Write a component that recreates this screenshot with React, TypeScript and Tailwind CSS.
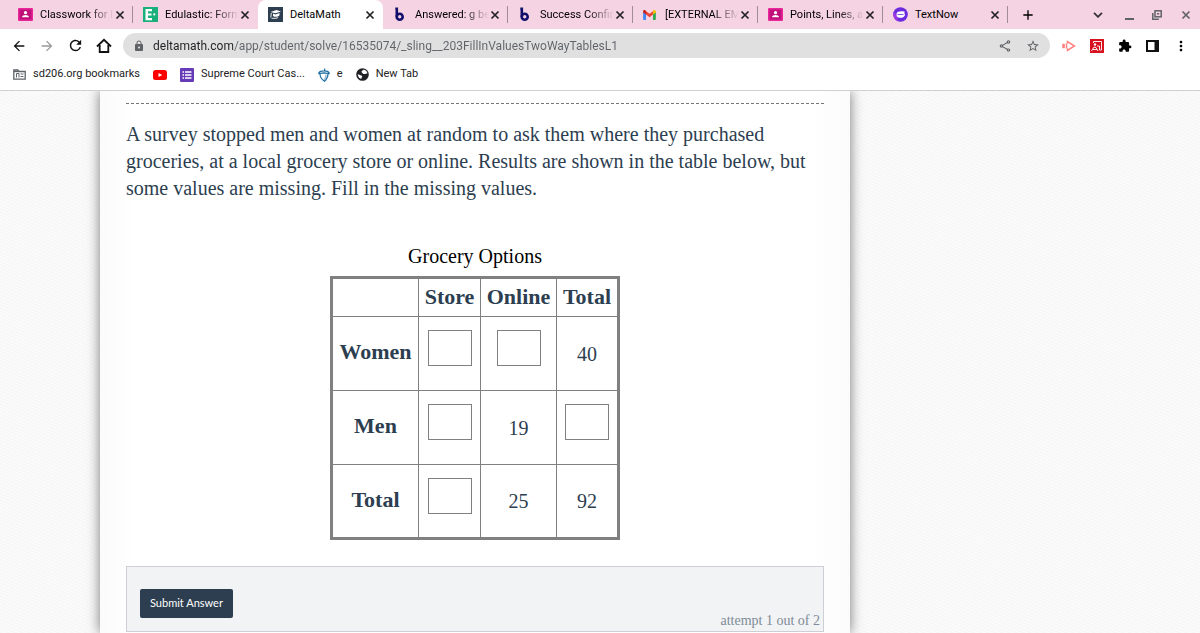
import { useState } from 'react';
import type { ReactNode } from 'react';
import {
  MdAdd,
  MdArrowBack,
  MdArrowForward,
  MdExtension,
  MdLock,
  MdMoreVert,
  MdOutlineShare,
  MdRefresh,
  MdStarBorder,
} from 'react-icons/md';

const ClassroomIcon = () => (
  <svg viewBox="0 0 15 13" className="h-[13px] w-[15px] shrink-0">
    <rect width="15" height="13" rx="1" fill="#e8289a" />
    <rect x="1.5" y="1.5" width="12" height="10" fill="#c2107a" />
    <circle cx="7.5" cy="4.7" r="1.6" fill="#fff" />
    <path d="M4 9.3c0-1.700 2-2.400 3.500-2.400s3.500.700 3.500 2.400z" fill="#fff" />
  </svg>
);

const EdulasticIcon = () => (
  <svg viewBox="0 0 15 15" className="size-[15px] shrink-0">
    <rect width="15" height="15" fill="#1ab07b" />
    <path d="M2.500 2h6.500v2.200H5v2.200h3.500v2.200H5v2.400h4V13.200H2.500z" fill="#fff" />
    <circle cx="11.300" cy="7.400" r="1.100" fill="#fff" />
  </svg>
);

const DeltaMathIcon = () => (
  <svg viewBox="0 0 15 15" className="size-[15px] shrink-0">
    <rect width="15" height="15" fill="#2c3e50" />
    <path d="M2.500 5l6-2 4.500 1.500-5.500 1.800z" fill="#fff" />
    <path d="M5 6.500l2.500.9 4-1.300v2.200c-1.500 1.800-5 2-6.500.6z" fill="#fff" />
    <path d="M3.300 6l-.5 4.500M3.500 11.300h4.500l2-.8" stroke="#fff" strokeWidth=".9" fill="none" />
  </svg>
);

const BartlebyIcon = () => (
  <svg viewBox="0 0 14 15" className="h-[15px] w-[14px] shrink-0" fill="none" stroke="#11106b" strokeWidth="2.600">
    <path d="M2.300 1.800h1.500v8" />
    <circle cx="6.700" cy="9.800" r="3" />
  </svg>
);

const GmailIcon = () => (
  <svg viewBox="0 0 14 11" className="h-[10px] w-[13px] shrink-0">
    <path d="M0 2v8a1 1 0 0 0 1 1h2.200V4.200z" fill="#4285f4" />
    <path d="M14 2v8a1 1 0 0 1-1 1h-2.200V4.200z" fill="#34a853" />
    <path d="M10.800 1.300V5L14 2.700V1.600C14 .1 12.300-.5 11.300.4z" fill="#fbbc04" />
    <path d="M3.200 5V1.300L7 4.200l3.800-2.900V5L7 7.900z" fill="#ea4335" />
    <path d="M0 1.600v1.100L3.200 5V1.300L2.700.5C1.700-.4 0 .1 0 1.600z" fill="#c5221f" />
  </svg>
);

const TextNowIcon = () => (
  <svg viewBox="0 0 15 15" className="size-[15px] shrink-0">
    <circle cx="7.500" cy="7.500" r="7.300" fill="#6d2be0" />
    <path d="M.8 5A7.300 7.300 0 0 0 5 14.300L4 8z" fill="#9c35e6" />
    <path d="M3.500 6.700C4 4.500 8 3.700 11.800 4.800l-.6 1.500c1.500 1 .7 4-2.700 4.500-3 .3-4.500-.8-4.800-1.800z" fill="#fff" />
    <path d="M4.500 7.500h6" stroke="#6d2be0" strokeWidth=".8" />
  </svg>
);

const CloseIcon = () => (
  <svg viewBox="0 0 12 12" className="size-3" fill="none" stroke="currentColor" strokeWidth="1.700">
    <path d="M2.500 2.500l7 7M9.500 2.500l-7 7" />
  </svg>
);

const HomeIcon = () => (
  <svg viewBox="0 0 16 16" className="size-4" fill="none" stroke="#111" strokeWidth="1.800">
    <path d="M1 8.500L8 1.800l7 6.700" />
    <path d="M3.700 7v7h8.600V7" />
  </svg>
);

const FolderIcon = () => (
  <svg viewBox="0 0 13 11" className="h-[11px] w-[13px] shrink-0" fill="none" stroke="#5f6368" strokeWidth="1.300">
    <path d="M.8 1h4l1.200 1.500h6.200v7.700H.8z" />
    <path d="M.8 2.500h5.200" />
    <path d="M3.500 8.500v-4h2.500v4M7.500 5h3M7.500 7.500h3" strokeWidth="1" />
  </svg>
);

const YoutubeIcon = () => (
  <svg viewBox="0 0 14 10" className="h-[10px] w-[14px] shrink-0">
    <rect width="14" height="10" rx="2.500" fill="#f00" />
    <path d="M5.500 2.900v4.200L9.200 5z" fill="#fff" />
  </svg>
);

const FormsIcon = () => (
  <svg viewBox="0 0 14 14" className="size-[14px] shrink-0">
    <rect width="14" height="14" rx="1" fill="#673ab7" />
    <path d="M2.500 4h1.500M2.500 7h1.500M2.500 10h1.500M5 4h6.500M5 7h6.500M5 10h6.500" stroke="#fff" strokeWidth="1.500" />
  </svg>
);

const AcornIcon = () => (
  <svg viewBox="0 0 12 14" className="h-[14px] w-3 shrink-0" fill="none" stroke="#1c6ca1" strokeWidth="1.200">
    <path d="M6.500 3l.3-2.500M.8 5.500C1 3.300 3.500 2.800 6 2.800s5 .5 5.200 2.700L6 4.800z" />
    <path d="M2 6c0 3.500 1 5 4.500 7.200C9 11 10 9.500 10 6" />
    <path d="M8 6.500c0 3-.5 4-2 5" strokeWidth=".7" />
  </svg>
);

const GlobeIcon = () => (
  <svg viewBox="0 0 13 13" className="size-[13px] shrink-0">
    <circle cx="6.500" cy="6.500" r="6.300" fill="#202124" />
    <path d="M5.500 3.500c0-1 2-1 2.300-2L10.500 3l1 2.500c-1.500 0-1.800.6-3 .6S5.500 5 5.500 3.500z" fill="#fff" />
    <path d="M1.500 6.500c1.500-.3 2 .5 3 .7s2 .5 1.700 1.600-.9.700-1 2.200L3 9.800z" fill="#fff" />
  </svg>
);

const PlayIcon = () => (
  <svg viewBox="0 0 14 12" className="h-3 w-[14px]" fill="none" stroke="#ff7f7f" strokeWidth="1.500">
    <path d="M5.500 3.500V1.500L12.500 6l-7 4.500v-2" />
    <path d="M.3 6h2.500" strokeWidth="4.500" />
    <path d="M4.500 3.500v5" />
  </svg>
);

const ReaderIcon = () => (
  <svg viewBox="0 0 14 14" className="size-[14px]">
    <rect width="14" height="14" fill="#d8121f" />
    <path d="M3.500 4V2.500h8v8.500H9.500V7H7" fill="none" stroke="#fff" strokeWidth=".9" />
    <circle cx="5" cy="5.500" r="1.200" fill="#fff" />
    <path d="M1.500 12l2.500-4L6 8.500l2 3.500M3 10.500h4" stroke="#fff" strokeWidth=".9" fill="none" />
  </svg>
);

const SidePanelIcon = () => (
  <svg viewBox="0 0 13 12" className="h-3 w-[13px]">
    <rect x="1" y="1" width="11" height="10" fill="#fff" stroke="#111" strokeWidth="2" />
    <rect x="8.500" width="4.500" height="12" fill="#111" />
  </svg>
);

const RestoreIcon = () => (
  <svg viewBox="0 0 10 10" className="size-[10px]" fill="none" stroke="#5f6368" strokeWidth="1.500">
    <rect x="3" y=".8" width="6.200" height="6" />
    <path d="M.8 3v6.200h6" />
    <path d="M5 3.800h2.200" />
  </svg>
);

const tabs: { title: string; icon: ReactNode; active?: boolean; divider?: boolean }[] = [
  { title: 'Classwork for l', icon: <ClassroomIcon />, divider: true },
  { title: 'Edulastic: Form', icon: <EdulasticIcon /> },
  { title: 'DeltaMath', icon: <DeltaMathIcon />, active: true },
  { title: 'Answered: g be', icon: <BartlebyIcon />, divider: true },
  { title: 'Success Confir', icon: <BartlebyIcon />, divider: true },
  { title: '[EXTERNAL EM', icon: <GmailIcon />, divider: true },
  { title: 'Points, Lines, a', icon: <ClassroomIcon />, divider: true },
  { title: 'TextNow', icon: <TextNowIcon />, divider: true },
];

const bookmarks = [
  { title: 'sd206.org bookmarks', icon: <FolderIcon /> },
  { title: '', icon: <YoutubeIcon /> },
  { title: 'Supreme Court Cas...', icon: <FormsIcon /> },
  { title: 'e', icon: <AcornIcon /> },
  { title: 'New Tab', icon: <GlobeIcon /> },
];

// null cells are the ones the student fills in
const rows: { label: string; cells: (number | null)[] }[] = [
  { label: 'Women', cells: [null, null, 40] },
  { label: 'Men', cells: [null, 19, null] },
  { label: 'Total', cells: [null, 25, 92] },
];

const columns = ['Store', 'Online', 'Total'];

function TabStrip() {
  return (
    <div className="flex h-[29px] bg-[#f6d3e3] pl-2">
      {tabs.map((tab) => (
        <div
          key={tab.title}
          className={
            tab.active
              ? 'flex max-w-[125px] min-w-0 flex-1 items-center rounded-t-lg bg-white pl-[10px]'
              : 'relative flex max-w-[125px] min-w-0 flex-1 items-center pl-[10px]'
          }
        >
          <button className="flex min-w-0 flex-1 items-center text-left">
            <span className="flex w-[22px] shrink-0">{tab.icon}</span>
            <span
              className={
                tab.title.length > 9
                  ? 'mask-[linear-gradient(90deg,#000_48px,transparent_74px)] pt-px whitespace-nowrap'
                  : 'pt-px whitespace-nowrap'
              }
            >
              {tab.title}
            </span>
          </button>
          <button aria-label="Close tab" className="mr-[7px] text-[#222]">
            <CloseIcon />
          </button>
          {tab.divider && <span className="absolute top-[6px] right-0 h-[17px] w-px bg-[#a08c96]" />}
        </div>
      ))}
      <button aria-label="New tab" className="ml-3">
        <MdAdd className="size-4" />
      </button>
      <div className="ml-auto flex items-center gap-[18px] pr-2 text-[#5f6368]">
        <button aria-label="Search tabs">
          <svg viewBox="0 0 10 6" className="h-[6px] w-[10px]" fill="none" stroke="#333" strokeWidth="1.800">
            <path d="M1 .8l4 4 4-4" />
          </svg>
        </button>
        <button aria-label="Minimize" className="ml-1 pt-2">
          <span className="block h-[2px] w-[9px] bg-[#5f6368]" />
        </button>
        <button aria-label="Restore">
          <RestoreIcon />
        </button>
        <button aria-label="Close window">
          <CloseIcon />
        </button>
      </div>
    </div>
  );
}

function Toolbar() {
  const [url, setUrl] = useState('deltamath.com/app/student/solve/16535074/_sling__203FillInValuesTwoWayTablesL1');

  return (
    <div className="flex h-[33px] items-center pr-[11px] pl-[11px]">
      <div className="flex w-[112px] items-center gap-3 text-[#111]">
        <button aria-label="Back">
          <MdArrowBack className="size-4" />
        </button>
        <button aria-label="Forward" className="text-[#999]">
          <MdArrowForward className="size-4" />
        </button>
        <button aria-label="Reload">
          <MdRefresh className="size-[17px]" />
        </button>
        <button aria-label="Home">
          <HomeIcon />
        </button>
      </div>
      <div className="flex h-[25px] flex-1 items-center rounded-full bg-[#e0e0e0] px-[10px] text-[#5f6368]">
        <MdLock className="size-3" />
        <input
          aria-label="Address"
          value={url}
          onChange={(e) => setUrl(e.target.value)}
          className="ml-2 min-w-0 flex-1 bg-[linear-gradient(90deg,#202124_80px,#5f6368_80px)] bg-clip-text text-[12px] text-transparent outline-none"
        />
        <button aria-label="Share" className="mr-[14px]">
          <MdOutlineShare className="size-[14px]" />
        </button>
        <button aria-label="Bookmark this page">
          <MdStarBorder className="size-[14px]" />
        </button>
      </div>
      <div className="ml-3 flex items-center gap-[14px]">
        <button aria-label="Screencast">
          <PlayIcon />
        </button>
        <button aria-label="Reader">
          <ReaderIcon />
        </button>
        <button aria-label="Extensions">
          <MdExtension className="size-[14px]" />
        </button>
        <button aria-label="Side panel">
          <SidePanelIcon />
        </button>
        <button aria-label="Menu">
          <MdMoreVert className="size-4" />
        </button>
      </div>
    </div>
  );
}

function BookmarksBar() {
  return (
    <div className="flex h-[29px] items-center gap-[13px] border-b border-[#d0d0d0] pb-[3px] pl-[13px] text-[#222]">
      {bookmarks.map((bookmark, i) => (
        <a key={i} href="#" aria-label={bookmark.title || 'YouTube'} className="flex items-center gap-[7px]">
          {bookmark.icon}
          {bookmark.title}
        </a>
      ))}
    </div>
  );
}

function GroceryTable() {
  const [answers, setAnswers] = useState<Record<string, string>>({});

  return (
    <table className="mx-auto table-fixed border-collapse border-3 border-[#808080] text-center text-[20px] text-[#2c3e50]">
      <caption className="pb-[7px] leading-[26px] text-black">Grocery Options</caption>
      <colgroup>
        <col className="w-[87px]" />
        <col className="w-[62px]" />
        <col className="w-[76px]" />
        <col className="w-[62px]" />
      </colgroup>
      <thead>
        <tr className="h-[39px]">
          <td className="border border-[#808080]" />
          {columns.map((column) => (
            <th key={column} scope="col" className="border border-[#808080] pb-[2px] text-[22px] leading-[26px]">
              {column}
            </th>
          ))}
        </tr>
      </thead>
      <tbody>
        {rows.map((row) => (
          <tr key={row.label} className="h-[74px]">
            <th scope="row" className="border border-[#808080] pb-[3px] text-[22px] leading-[26px]">
              {row.label}
            </th>
            {row.cells.map((cell, i) => {
              const key = `${row.label}-${columns[i]}`;
              return (
                <td key={key} className="border border-[#808080]">
                  {cell === null ? (
                    <input
                      aria-label={`${row.label}, ${columns[i]}`}
                      value={answers[key] ?? ''}
                      onChange={(e) => setAnswers({ ...answers, [key]: e.target.value })}
                      className="mx-auto mb-[11px] block h-9 w-11 border border-[#808080] bg-white text-center"
                    />
                  ) : (
                    cell
                  )}
                </td>
              );
            })}
          </tr>
        ))}
      </tbody>
    </table>
  );
}

export default function App() {
  return (
    <div className="flex h-screen flex-col overflow-hidden bg-white font-['Roboto',sans-serif] text-[11px]">
      <header>
        <TabStrip />
        <Toolbar />
        <BookmarksBar />
      </header>
      <main className="min-h-0 flex-1 overflow-hidden bg-[#f9f9f9] bg-[repeating-linear-gradient(25deg,#f7f7f7_0px,#f7f7f7_1px,#fbfbfb_2px,#fbfbfb_3px)]">
        <div className="ml-25 min-h-full w-5/8 bg-[linear-gradient(90deg,#fbfbfb,#fff_5%,#fff_95%,#fbfbfb)] px-[26px] pt-3 font-['Liberation_Serif',serif] shadow-[0_0_12px_#777]">
          <div className="border-t border-dashed border-[#777]" />
          <p className="mt-[17px] text-[20px] leading-[27px] text-[#2c3e50]">
            A survey stopped men and women at random to ask them where they purchased groceries, at a local grocery
            store or online. Results are shown in the table below, but some values are missing. Fill in the missing
            values.
          </p>
          <div className="mt-[41px]">
            <GroceryTable />
          </div>
          <div className="mt-[26px] flex h-[66px] items-end justify-between border border-[#cdced6] bg-[#f1f3f5] pr-[3px] pl-[13px]">
            <button className="mb-[13px] h-[29px] rounded-xs bg-[#2c3e50] px-[10px] font-['Lato',sans-serif] text-[11px] text-white">
              Submit Answer
            </button>
            <span className="text-[14px] leading-5 text-[#7f8b97]">attempt 1 out of 2</span>
          </div>
        </div>
      </main>
    </div>
  );
}
